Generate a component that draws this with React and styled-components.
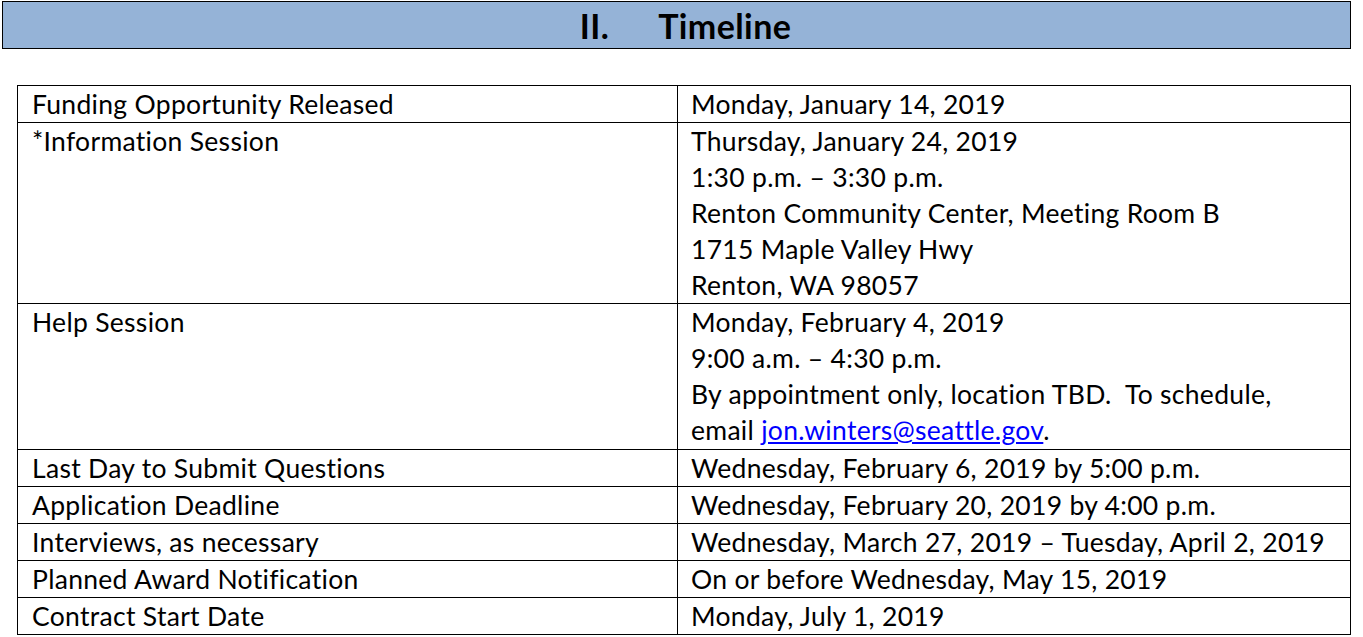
import React from 'react';
import styled, { createGlobalStyle } from 'styled-components';

const GlobalStyle = createGlobalStyle`
  html, body {
    margin: 0;
    padding: 0;
    background: #ffffff;
  }
  body {
    font-family: Lato, 'Open Sans', sans-serif;
    color: #000000;
  }
`;

const Page = styled.div`
  width: 1349px;
  padding: 1px 0 0 2px;
`;

const SectionBar = styled.h2`
  margin: 0;
  height: 46px;
  background-color: #95b3d7;
  border: 1px solid #000000;
  display: flex;
  justify-content: center;
  align-items: center;
  gap: 49px;
  font-size: 34px;
  font-weight: 700;
  letter-spacing: 0.4px;
  padding-left: 18px;
`;

const Table = styled.div`
  margin: 36px 0 0 15px;
  display: grid;
  grid-template-columns: 660px 1fr;
  border-top: 1px solid #000000;
  border-left: 1px solid #000000;
`;

const Cell = styled.div`
  border-right: 1px solid #000000;
  border-bottom: 1px solid #000000;
  padding: 0 0 ${(p) => (p.$extra ? '1px' : '0')} ${(p) => (p.$value ? '13px' : '14px')};
  font-size: 26.5px;
  line-height: 36px;
  letter-spacing: 0.3px;
`;

const Line = styled.div`
  white-space: nowrap;
`;

const Link = styled.a`
  color: #0000ff;
  text-decoration: underline;
`;

const rows = [
  { label: 'Funding Opportunity Released', value: ['Monday, January 14, 2019'] },
  {
    label: '*Information Session',
    value: [
      'Thursday, January 24, 2019',
      '1:30 p.m. \u2013 3:30 p.m.',
      'Renton Community Center, Meeting Room B',
      '1715 Maple Valley Hwy',
      'Renton, WA 98057',
    ],
  },
  {
    label: 'Help Session',
    value: [
      'Monday, February 4, 2019',
      '9:00 a.m. \u2013 4:30 p.m.',
      'By appointment only, location TBD.\u00a0 To schedule,',
      'EMAIL',
    ],
  },
  { label: 'Last Day to Submit Questions', value: ['Wednesday, February 6, 2019 by 5:00 p.m.'] },
  { label: 'Application Deadline', value: ['Wednesday, February 20, 2019 by 4:00 p.m.'] },
  {
    label: 'Interviews, as necessary',
    value: ['Wednesday, March 27, 2019 \u2013 Tuesday, April 2, 2019'],
  },
  { label: 'Planned Award Notification', value: ['On or before Wednesday, May 15, 2019'] },
  { label: 'Contract Start Date', value: ['Monday, July 1, 2019'] },
];

export default function App() {
  return (
    <Page>
      <GlobalStyle />
      <SectionBar>
        <span>II.</span>
        <span>Timeline</span>
      </SectionBar>
      <Table>
        {rows.map((row) => (
          <React.Fragment key={row.label}>
            <Cell $extra={row.value.length === 4}>{row.label}</Cell>
            <Cell $value $extra={row.value.length === 4}>
              {row.value.map((line, i) =>
                line === 'EMAIL' ? (
                  <Line key={i}>
                    email <Link href="#">jon.winters@seattle.gov</Link>.
                  </Line>
                ) : (
                  <Line key={i}>{line}</Line>
                )
              )}
            </Cell>
          </React.Fragment>
        ))}
      </Table>
    </Page>
  );
}
